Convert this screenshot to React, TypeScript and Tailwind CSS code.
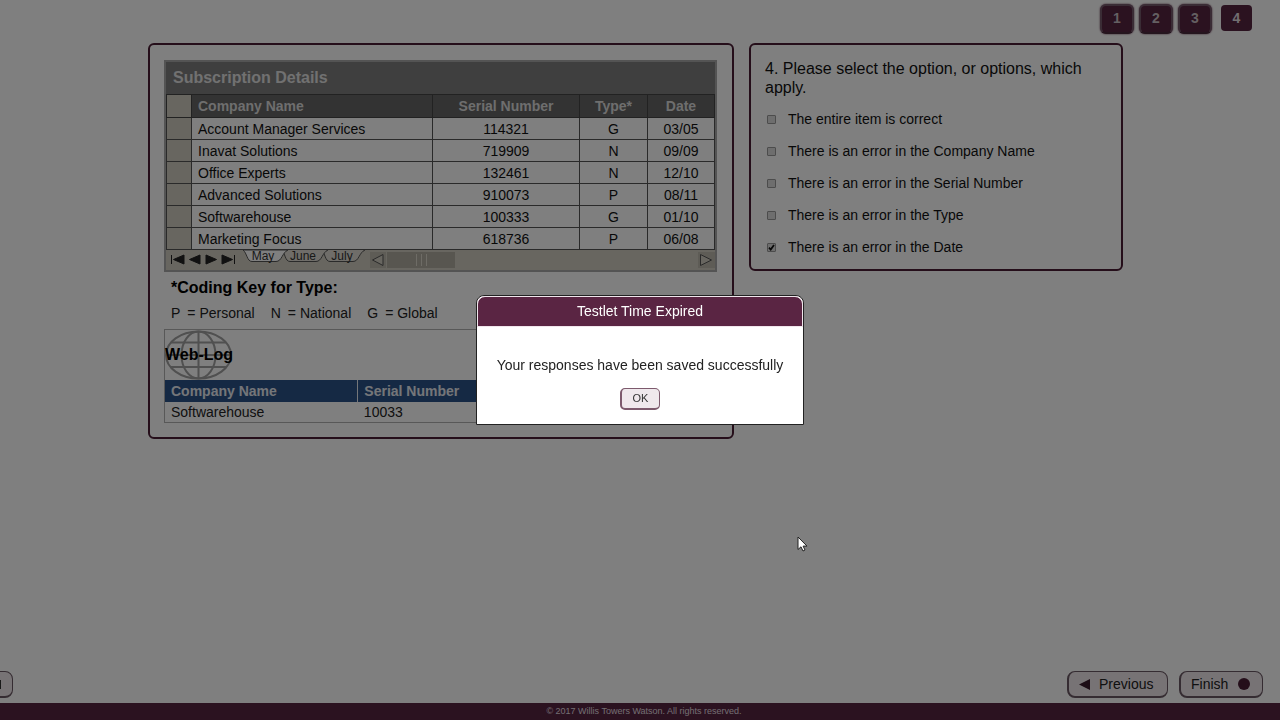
import { useState } from "react";

const subscriptions = [
	{ id: 1, company: "Account Manager Services", serial: "114321", type: "G", date: "03/05" },
	{ id: 2, company: "Inavat Solutions", serial: "719909", type: "N", date: "09/09" },
	{ id: 3, company: "Office Experts", serial: "132461", type: "N", date: "12/10" },
	{ id: 4, company: "Advanced Solutions", serial: "910073", type: "P", date: "08/11" },
	{ id: 5, company: "Softwarehouse", serial: "100333", type: "G", date: "01/10" },
	{ id: 6, company: "Marketing Focus", serial: "618736", type: "P", date: "06/08" },
];

const codingKey = [
	{ code: "P", label: "Personal" },
	{ code: "N", label: "National" },
	{ code: "G", label: "Global" },
];

const options = [
	"The entire item is correct",
	"There is an error in the Company Name",
	"There is an error in the Serial Number",
	"There is an error in the Type",
	"There is an error in the Date",
];

function Pager() {
	return (
		<nav className="h-[43px] flex items-start justify-end gap-[5px] pt-1 pr-7">
			{[1, 2, 3].map((n) => (
				<button
					key={n}
					type="button"
					className="w-[34px] h-[30px] rounded-md border-2 border-[#75586a] border-b-[#4a2a3d] bg-[#562440] pb-0.5 text-sm leading-none font-bold text-[#c8bec4] shadow-[0_0_2px_#592642]">
					{n}
				</button>
			))}
			<button
				type="button"
				aria-current="page"
				className="w-[31px] h-[26px] mt-px ml-1 rounded-sm bg-[#562440] text-sm leading-none font-bold text-[#e4dce1]">
				4
			</button>
		</nav>
	);
}

function SheetBar() {
	return (
		<div className="flex h-5 bg-[#d0ccc0]">
			<svg width="204" height="20" viewBox="0 0 204 20" className="shrink-0" aria-hidden="true">
				<g fill="#222" stroke="#222">
					<path d="M5.500 5v9" />
					<path d="M18 5v9L7.500 9.500z" />
					<path d="M34 5v9L23.500 9.500z" />
					<path d="M40 5v9L50.500 9.500z" />
					<path d="M56 5v9L66.500 9.500z" />
					<path d="M68.500 5v9" />
				</g>
				<g stroke="#555" fill="#dedbd2">
					<path d="M156 0c3 3 3 11.500 8 11.500h23c6 0 6-9 12-11.500" />
					<path d="M116 0c3 3 3 11.500 8 11.500h26c6 0 6-9 12-11.500" />
					<path d="M77 0c4 3 4 11.500 9 11.500h24c6 0 6-9 12-11.500z" fill="#fff" />
				</g>
				<g fontFamily="Liberation Sans, Arial, sans-serif" fontSize="12" fill="#333" textAnchor="middle">
					<text x="97" y="10">May</text>
					<text x="137" y="10">June</text>
					<text x="176" y="10">July</text>
				</g>
			</svg>
			<div className="flex flex-1 items-center justify-between">
				<div className="flex items-center">
					<svg width="16" height="16" viewBox="0 0 16 16" aria-hidden="true">
						<path d="M0 0h16v16H0z" fill="#bcb8ac" />
						<path d="M13 2.500v11L2.500 8z" fill="#d0ccc0" stroke="#555" />
					</svg>
					<div className="flex items-center justify-center gap-1 w-[68px] h-4 ml-px bg-[#b0aca0]">
						<span className="w-px h-3 bg-[#dcd8cc]" />
						<span className="w-px h-3 bg-[#dcd8cc]" />
						<span className="w-px h-3 bg-[#dcd8cc]" />
					</div>
				</div>
				<svg width="17" height="16" viewBox="0 0 17 16" aria-hidden="true">
					<path d="M0 0h17v16H0z" fill="#bcb8ac" />
					<path d="M2.500 2.500v11L13.500 8z" fill="#d0ccc0" stroke="#555" />
				</svg>
			</div>
		</div>
	);
}

function Subscriptions() {
	return (
		<div className="border-2 border-[#a8a8a8]">
			<h2 className="h-8 px-[7px] bg-[#7e7e7e] text-base leading-8 font-bold text-[#e2e2e2]">
				Subscription Details
			</h2>
			<table className="w-full table-fixed border-collapse text-sm leading-5 text-center text-[#111]">
				<colgroup>
					<col className="w-[25px]" />
					<col className="w-[44%]" />
					<col />
					<col className="w-[68px]" />
					<col className="w-[67px]" />
				</colgroup>
				<thead>
					<tr className="h-[23px] bg-[#676767] text-[#dcdcdc]">
						<td className="border border-[#444] bg-[#d0ccc0]" />
						<th className="border border-[#444] px-1.5 text-left">Company Name</th>
						<th className="border border-[#444]">Serial Number</th>
						<th className="border border-[#444]">Type*</th>
						<th className="border border-[#444]">Date</th>
					</tr>
				</thead>
				<tbody>
					{subscriptions.map((row) => (
						<tr key={row.id} className="h-[22px]">
							<td className="border border-[#555] bg-[#d0ccc0]" />
							<td className="border border-[#555] px-1.5 text-left">{row.company}</td>
							<td className="border border-[#555]">{row.serial}</td>
							<td className="border border-[#555]">{row.type}</td>
							<td className="border border-[#555]">{row.date}</td>
						</tr>
					))}
				</tbody>
			</table>
			<SheetBar />
		</div>
	);
}

function WebLog() {
	return (
		<div className="border border-[#b0b0b0]">
			<div className="relative flex items-center w-[68px] h-[50px]">
				<svg width="68" height="50" viewBox="0 0 68 50" fill="none" stroke="#a0a0a0" strokeWidth="2" aria-hidden="true">
					<ellipse cx="33.500" cy="25" rx="32.500" ry="23.500" />
					<ellipse cx="33.500" cy="25" rx="17" ry="23.500" />
					<path d="M33.500 1.500v47M1 25h65M6 12.500h55M6 37h55" />
				</svg>
				<h2 className="absolute inset-x-0 flex justify-center text-base leading-5 font-bold text-black whitespace-nowrap">
					Web-Log
				</h2>
			</div>
			<table className="w-full table-fixed text-sm leading-5 text-left">
				<thead>
					<tr className="h-[22px] bg-[#2b5288] text-[#e8ecf2]">
						<th className="w-[35%] px-1.5 border-r border-[#e8ecf2]">Company Name</th>
						<th className="px-1.5">Serial Number</th>
					</tr>
				</thead>
				<tbody>
					<tr className="h-5 text-[#222]">
						<td className="px-1.5">Softwarehouse</td>
						<td className="px-1.5">10033</td>
					</tr>
				</tbody>
			</table>
		</div>
	);
}

function Question() {
	const [checked, setChecked] = useState([4]);
	const toggle = (i: number) =>
		setChecked(checked.includes(i) ? checked.filter((c) => c !== i) : [...checked, i]);

	return (
		<fieldset className="min-w-0 rounded-md border-2 border-[#4a1c34] px-[14px] pt-[14px] pb-3 text-[#111]">
			<div id="question" className="text-base leading-[19px]">
				4. Please select the option, or options, which apply.
			</div>
			<div className="flex flex-col gap-3 mt-3" role="group" aria-labelledby="question">
				{options.map((option, i) => (
					<label key={option} className="flex items-center gap-3 pl-0.5 text-sm leading-5">
						<span className="relative flex">
							<input
								type="checkbox"
								checked={checked.includes(i)}
								onChange={() => toggle(i)}
								className="peer appearance-none size-[9px] border border-[#999] rounded-[1px] bg-[#dcdcdc]"
							/>
							<svg
								viewBox="0 0 9 9"
								className="absolute inset-0 size-[9px] hidden peer-checked:block pointer-events-none"
								fill="none"
								stroke="#111"
								strokeWidth="1.800">
								<path d="M2 4.700 3.700 6.500 7 2" />
							</svg>
						</span>
						{option}
					</label>
				))}
			</div>
		</fieldset>
	);
}

const navButton =
	"flex items-center h-[27px] rounded-lg border border-[#6b5964] border-l-2 border-b-2 bg-[#eee6eb] text-sm leading-none text-[#222]";

function Dialog() {
	return (
		<div className="fixed inset-0 flex items-center justify-center bg-black/50">
			<div
				role="dialog"
				aria-labelledby="dialog-title"
				className="w-[328px] rounded-t-lg border border-[#222] bg-white text-sm text-[#222] text-center overflow-hidden">
				<h1 id="dialog-title" className="h-[31px] border border-[#f0e6ec] rounded-t-lg bg-[#5a2543] leading-[29px] text-white">
					Testlet Time Expired
				</h1>
				<p className="mt-7 leading-5">Your responses have been saved successfully</p>
				<button
					type="button"
					className="w-10 h-[22px] mt-[13px] mb-[14px] rounded-[5px] border border-[#7d5a6d] border-l-2 border-b-2 bg-[#efe8ec] text-[11px] leading-none text-[#333] align-top">
					OK
				</button>
			</div>
		</div>
	);
}

export default function App() {
	return (
		<div className="min-h-screen flex flex-col bg-white font-['Liberation_Sans',Arial,sans-serif] overflow-hidden">
			<Pager />
			<main className="flex-1 grid grid-cols-[586fr_374fr] items-start gap-[15px] pl-[148px] pr-[157px]">
				<section className="rounded-md border-2 border-[#4a1c34] pl-[14px] pr-[15px] pt-[15px] pb-[14px]">
					<Subscriptions />
					<h3 className="mt-1.5 px-[7px] text-base leading-5 font-bold text-black">*Coding Key for Type:</h3>
					<dl className="flex gap-4 mt-[5px] mb-1.5 px-[7px] text-sm leading-5 text-[#222]">
						{codingKey.map((item) => (
							<div key={item.code} className="flex gap-[7px]">
								<dt>{item.code}</dt>
								<dd>= {item.label}</dd>
							</div>
						))}
					</dl>
					<WebLog />
				</section>
				<Question />
			</main>
			<div className="flex items-center justify-between pr-[17px] pb-[5px]">
				<button type="button" aria-label="Menu" className={`${navButton} w-10 -ml-[27px] pl-[17px]`}>
					<svg width="9" height="9" aria-hidden="true">
						<path d="M0 0h9v9H0z" fill="#333" />
					</svg>
				</button>
				<div className="flex gap-[11px]">
					<button type="button" className={`${navButton} w-[101px] gap-[9px] pl-2.5`}>
						<svg width="11" height="11" aria-hidden="true">
							<path d="M11 0v11L0 5.500z" fill="#3a1a2c" />
						</svg>
						Previous
					</button>
					<button type="button" className={`${navButton} w-[84px] justify-between pl-2.5 pr-3`}>
						Finish
						<svg width="12" height="12" aria-hidden="true">
							<circle cx="6" cy="6" r="6" fill="#4a1c34" />
						</svg>
					</button>
				</div>
			</div>
			<footer className="h-[17px] bg-[#562440] pl-2 text-[9px] leading-[17px] text-center text-[#e4dce1]">
				© 2017 Willis Towers Watson. All rights reserved.
			</footer>
			<Dialog />
			<svg width="12" height="18" viewBox="0 0 12 18" className="absolute left-[797px] top-[536px]" aria-hidden="true">
				<path d="M1 1v12.500l3-2.700 2 4.200 2-1-1.900-3.900H10z" fill="#fff" stroke="#222" />
			</svg>
		</div>
	);
}
